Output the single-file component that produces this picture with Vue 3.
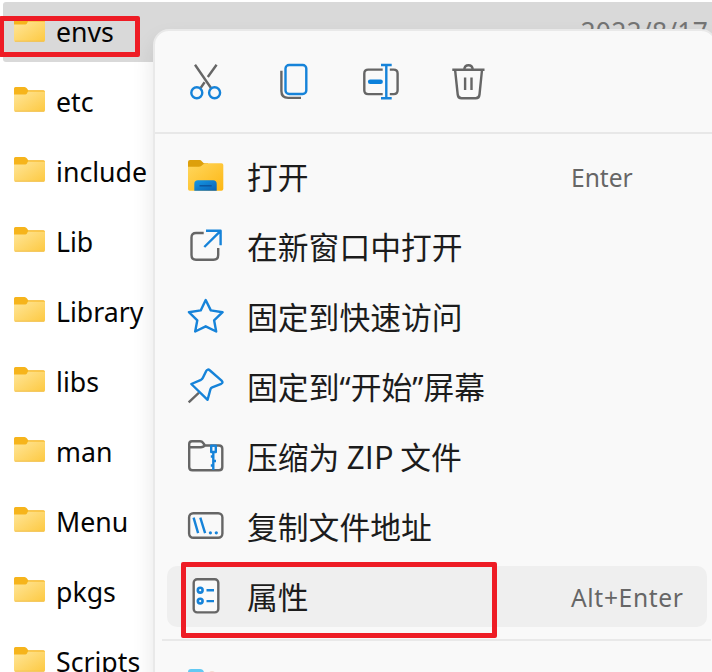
<script setup>
const files = [
  { name: 'envs', selected: true },
  { name: 'etc' },
  { name: 'include' },
  { name: 'Lib' },
  { name: 'Library' },
  { name: 'libs' },
  { name: 'man' },
  { name: 'Menu' },
  { name: 'pkgs' },
  { name: 'Scripts' },
]

const actions = ['cut', 'copy', 'rename', 'delete']

const items = [
  { icon: 'open', label: '打开', shortcut: 'Enter' },
  { icon: 'window', label: '在新窗口中打开' },
  { icon: 'star', label: '固定到快速访问' },
  { icon: 'pin', label: '固定到“开始”屏幕', quoted: true },
  { icon: 'zip', label: '压缩为 ZIP 文件' },
  { icon: 'path', label: '复制文件地址' },
  { icon: 'properties', label: '属性', shortcut: 'Alt+Enter', active: true },
]
</script>

<template>
  <div class="screen">
    <svg class="defs" width="0" height="0">
      <defs>
        <linearGradient id="folderBody" x1="0" y1="0" x2="1" y2="1">
          <stop offset="0" stop-color="#ffe69a" />
          <stop offset="1" stop-color="#fdc941" />
        </linearGradient>
        <linearGradient id="openBody" x1="0" y1="0" x2="1" y2="1">
          <stop offset="0" stop-color="#ffd75e" />
          <stop offset="1" stop-color="#fdb714" />
        </linearGradient>
        <linearGradient id="openBlue" x1="0" y1="0" x2="1" y2="1">
          <stop offset="0" stop-color="#1598e5" />
          <stop offset="1" stop-color="#0a62b5" />
        </linearGradient>
      </defs>
    </svg>

    <div class="files">
      <div v-for="f in files" :key="f.name" class="file" :class="{ selected: f.selected }">
        <svg class="folder" width="31" height="25" viewBox="0 0 31 25">
          <path d="M0 10V1.5Q0 0 1.5 0H10.5Q12 0 13 1.5L14.2 3.2H29.5Q31 3.2 31 4.7V10Z" fill="#f6b41c" />
          <path d="M0 7.5H11.5Q13 7 14 4.4H31V23.2Q31 24.7 29.5 24.7H1.5Q0 24.7 0 23.2Z" fill="url(#folderBody)" />
          <path d="M1 24.2H30" stroke="#eebd4c" stroke-width="0.8" />
        </svg>
        <span class="name">{{ f.name }}</span>
        <span v-if="f.selected" class="date">2022/8/17</span>
      </div>
    </div>

    <div class="menu">
      <div class="toolbar">
        <svg v-for="a in actions" :key="a" class="icon" width="36" height="36" viewBox="0 0 36 36">
          <template v-if="a === 'cut'">
            <path class="g" d="M7 .7 23 24M28.6 .7 19.8 13M16.6 18.3 12.6 24" />
            <circle class="b" cx="8.8" cy="28.7" r="5.5" />
            <circle class="b" cx="26.6" cy="28.7" r="5.5" />
          </template>
          <template v-else-if="a === 'copy'">
            <path class="g" d="M5.4 6.8V27Q5.4 33.9 12.2 33.9H25" />
            <rect class="b" x="9.5" y="1" width="20.8" height="29" rx="3.6" />
          </template>
          <template v-else-if="a === 'rename'">
            <path class="g" d="M19.7 5.6H5.2Q1.3 5.6 1.3 9.5V26.2Q1.3 30.1 5.2 30.1H19.7M26.8 5.6H30.7Q34.6 5.6 34.6 9.5V26.2Q34.6 30.1 30.7 30.1H26.8" />
            <path class="b" d="M18 1H28.7M18 34.2H28.7M23.3 1V34.2" />
            <path class="bar" d="M7.2 17.8H17.6" />
          </template>
          <template v-else>
            <path class="g" d="M1.3 5.7H33.5M4.1 6 6.7 30.5Q7.1 34.3 10.5 34.3H24.8Q28.1 34.3 28.5 30.5L31 6M13.2 5.3Q13.7 1.2 17.5 1.2T21.8 5.3M14.1 13.5V26M20.5 13.5V26" />
          </template>
        </svg>
      </div>

      <div class="items">
        <div v-for="m in items" :key="m.icon" class="item" :class="{ active: m.active }">
          <svg class="icon" width="36" height="36" viewBox="0 0 36 36">
            <template v-if="m.icon === 'open'">
              <path d="M0 12V4Q0 2 2 2H11.5Q13 2 14 3.4L15.8 5.2H20V12Z" fill="#dda00c" />
              <path d="M0 8.8H11Q13 8.7 14.7 6.8Q16 5.2 18 5.2H33.5Q35.3 5.2 35.3 7V31Q35.3 32.8 33.5 32.8H1.8Q0 32.8 0 31Z" fill="url(#openBody)" />
              <path d="M6.3 32.8V26Q6.3 22.3 10 22.3H25Q28.7 22.3 28.7 26V32.8Z" fill="url(#openBlue)" />
              <path d="M11.5 27.8H23.7" stroke="#0c539b" stroke-width="1.4" />
            </template>
            <template v-else-if="m.icon === 'window'">
              <path class="g" d="M15.7 5H8Q3.5 5 3.5 9.5V27Q3.5 31.7 8 31.7H25.5Q30.2 31.7 30.2 27V20" />
              <path class="b" d="M16.3 19 32.6 2.8M18 2.8H32.6V17.3" />
            </template>
            <path v-else-if="m.icon === 'star'" class="b" d="M17.7 2 22.8 12.4 34.6 14.2 26.1 22.3 28.2 33.5 17.7 28.3 7.2 33.5 9.3 22.3.9 14.2 12.7 12.4Z" />
            <template v-else-if="m.icon === 'pin'">
              <path class="g" d="M.7 34.3 11 24.6" />
              <path class="b" d="M3.3 16 13 11.8Q14.3 11.1 14.9 9.8L18.2 3Q19.5.4 22 2.5L33.6 12.6Q35.6 14.5 33.2 15.8L24.2 19.4Q22.8 20 22.4 21.4L19.6 31.8Z" />
            </template>
            <template v-else-if="m.icon === 'zip'">
              <path class="g" d="M1.2 9.3V6Q1.2 3.2 4 3.2H12Q14 3.2 15.2 5L17 7.5H31Q34.3 7.5 34.3 10.8V29Q34.3 32.3 31 32.3H4.5Q1.2 32.3 1.2 29ZM1.2 9.3H13Q15 9.3 17 7.5" />
              <path class="b" d="M23.2 7.6H27.8V14H23.2ZM25.3 14V32M22.8 18.5H25.3M25.3 23H28M22.8 27.5H25.3" />
            </template>
            <template v-else-if="m.icon === 'path'">
              <rect class="g" x="1.1" y="5.2" width="33.3" height="24.6" rx="4.2" />
              <path class="b" d="M5.6 9.7 10.1 25.2M12.3 9.7 17.1 25.2" />
              <circle class="dot" cx="22.4" cy="24.8" r="1.6" />
              <circle class="dot" cx="28.3" cy="24.8" r="1.6" />
            </template>
            <template v-else>
              <rect class="g page" x="5.7" y="1.2" width="24.6" height="33.2" rx="3.5" />
              <circle class="ring" cx="12.2" cy="12.2" r="2.4" />
              <circle class="ring" cx="12.2" cy="23.1" r="2.4" />
              <path class="b" d="M18.5 12.2H26M18.5 23.1H26" />
            </template>
          </svg>
          <span class="label" :class="{ quoted: m.quoted }">{{ m.label }}</span>
          <span v-if="m.shortcut" class="shortcut" :class="{ wide: m.active }">{{ m.shortcut }}</span>
        </div>
      </div>

      <div class="divider"></div>
      <div class="next">
        <svg width="36" height="36" viewBox="0 0 36 36">
          <path d="M0 8V3Q0 0 3 0H12Q15 0 16 3V8Z" fill="#62c9f3" />
          <path d="M19 6Q21 2 24 2T29 6Z" fill="#f4ded3" />
        </svg>
      </div>
    </div>

    <div class="mark mark-file"></div>
    <div class="mark mark-item"></div>
  </div>
</template>

<style>
body {
  overflow: hidden;
  background: #fff;
}
</style>

<style scoped>
.screen {
  position: relative;
  width: 712px;
  height: 672px;
  overflow: hidden;
  box-sizing: border-box;
  background: #fff;
  font-family: "Noto Sans", "Noto Sans CJK SC", sans-serif;
}
.defs {
  position: absolute;
}
.files {
  display: flex;
  flex-direction: column;
  gap: 10px;
  padding: 2px 0 0 3px;
}
.file {
  display: flex;
  align-items: center;
  flex: none;
  height: 60px;
  padding-left: 11px;
  border-radius: 3px 0 0 3px;
}
.file.selected {
  background: #d9d9d9;
}
.folder {
  flex: none;
  margin-top: -5px;
}
.name {
  margin-left: 11px;
  font-size: 26.7px;
  line-height: 60px;
  color: #050505;
}
.date {
  margin-left: auto;
  margin-right: 4px;
  padding-top: 1px;
  font-size: 26.4px;
  line-height: 59px;
  letter-spacing: 0.25px;
  color: #747474;
}
.menu {
  position: absolute;
  left: 153px;
  top: 29px;
  width: 564px;
  height: 700px;
  box-sizing: border-box;
  border: 2px solid #e9e9e9;
  border-radius: 16px;
  background: #f9f9f9;
  box-shadow: 0 12px 22px rgba(0, 0, 0, 0.1);
}
.toolbar {
  display: flex;
  gap: 51.5px;
  height: 103px;
  padding: 33px 0 0 33px;
  box-sizing: border-box;
  border-bottom: 2px solid #e8e8e8;
}
.icon {
  flex: none;
  overflow: visible;
}
.g,
.b {
  fill: none;
  stroke-width: 2.4;
  stroke-linejoin: round;
}
.g {
  stroke: #666;
}
.b {
  stroke: #1683d9;
}
.bar {
  stroke: #0b80db;
  stroke-width: 4.6;
  stroke-linecap: round;
}
.dot {
  fill: #1683d9;
}
.page {
  fill: #fafafa;
}
.ring {
  fill: none;
  stroke: #1683d9;
  stroke-width: 2.6;
}
.items {
  display: flex;
  flex-direction: column;
  gap: 9px;
  padding: 12px 8px 0 12px;
}
.item {
  display: flex;
  align-items: center;
  height: 61px;
  padding-left: 21px;
  border-radius: 10px;
}
.item .icon {
  margin-bottom: 2px;
}
.item.active {
  background: #efefef;
}
.label {
  width: 324px;
  margin-left: 23px;
  padding-bottom: 2px;
  font-family: "Noto Sans CJK SC", sans-serif;
  font-size: 30.8px;
  line-height: 44px;
  white-space: nowrap;
  color: #1c1c1c;
}
.label.quoted {
  padding-bottom: 0;
  font-family: "Noto Sans", "Noto Sans CJK SC", sans-serif;
  letter-spacing: 0.05px;
}
.shortcut {
  padding-top: 3px;
  font-size: 24.6px;
  line-height: 40px;
  white-space: nowrap;
  color: #666;
}
.shortcut.wide {
  letter-spacing: 0.65px;
}
.divider {
  height: 2px;
  margin: 12px 4px 0 7px;
  background: #e9e9e9;
}
.next {
  padding: 28px 0 0 33px;
}
.mark {
  position: absolute;
  box-sizing: border-box;
  border: 5px solid #ee1c25;
  border-radius: 2px;
}
.mark-file {
  left: -1px;
  top: 16px;
  width: 141px;
  height: 41px;
}
.mark-item {
  left: 181px;
  top: 562px;
  width: 316px;
  height: 76px;
}
</style>
